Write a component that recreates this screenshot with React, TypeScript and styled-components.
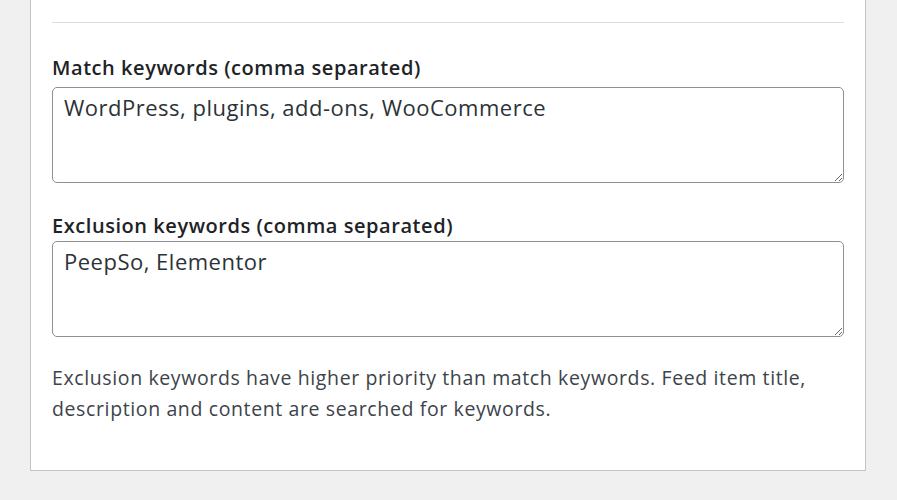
import styled, { createGlobalStyle } from 'styled-components';

const GlobalStyle = createGlobalStyle`
    html, body {
        margin: 0;
        padding: 0;
        background: #f0f0f1;
        font-family: "Open Sans", "Noto Sans", sans-serif;
        color: #3c434a;
    }
`

const Page = styled.div`
    width: 897px;
    height: 500px;
    overflow: hidden;
    padding-left: 30px;
    box-sizing: border-box;
`

const Panel = styled.section`
    width: 836px;
    height: 471px;
    box-sizing: border-box;
    background: #fff;
    border: 1px solid #c3c4c7;
    border-top: 0;
    padding: 0 21px;
`

const Divider = styled.hr`
    margin: 0;
    padding-top: 22px;
    border: 0;
    border-bottom: 1px solid #dcdcde;
    height: 0;
`

interface FieldProps {
    $top: number;
    $gap: number;
}

const Field = styled.div<FieldProps>`
    display: flex;
    flex-direction: column;
    gap: ${p => p.$gap}px;
    margin-top: ${p => p.$top}px;
`

const Label = styled.label`
    font-size: 20px;
    font-weight: 600;
    letter-spacing: 0.55px;
    color: #1d2327;
    line-height: 24px;
`

const Area = styled.textarea`
    display: block;
    width: 792px;
    height: 96px;
    box-sizing: border-box;
    margin: 0;
    border: 1px solid #8c8f94;
    border-radius: 5px;
    padding: 4px 11px;
    font-family: "Open Sans", "Noto Sans", sans-serif;
    font-size: 22px;
    letter-spacing: 0.5px;
    line-height: 30px;
    color: #2c3338;
    background: #fff;
    outline: none;
`

const Description = styled.p`
    margin: 25px 0 0;
    font-size: 19.5px;
    letter-spacing: 0.62px;
    line-height: 31px;
    color: #3c434a;
`

export default function App() {
    return (
        <>
            <GlobalStyle/>
            <Page>
                <Panel>
                    <Divider/>
                    <Field $top={33} $gap={7}>
                        <Label>Match keywords (comma separated)</Label>
                        <Area defaultValue="WordPress, plugins, add-ons, WooCommerce"/>
                    </Field>
                    <Field $top={31} $gap={3}>
                        <Label>Exclusion keywords (comma separated)</Label>
                        <Area defaultValue="PeepSo, Elementor"/>
                    </Field>
                    <Description>
                        Exclusion keywords have higher priority than match keywords. Feed item title,
                        description and content are searched for keywords.
                    </Description>
                </Panel>
            </Page>
        </>
    )
}
